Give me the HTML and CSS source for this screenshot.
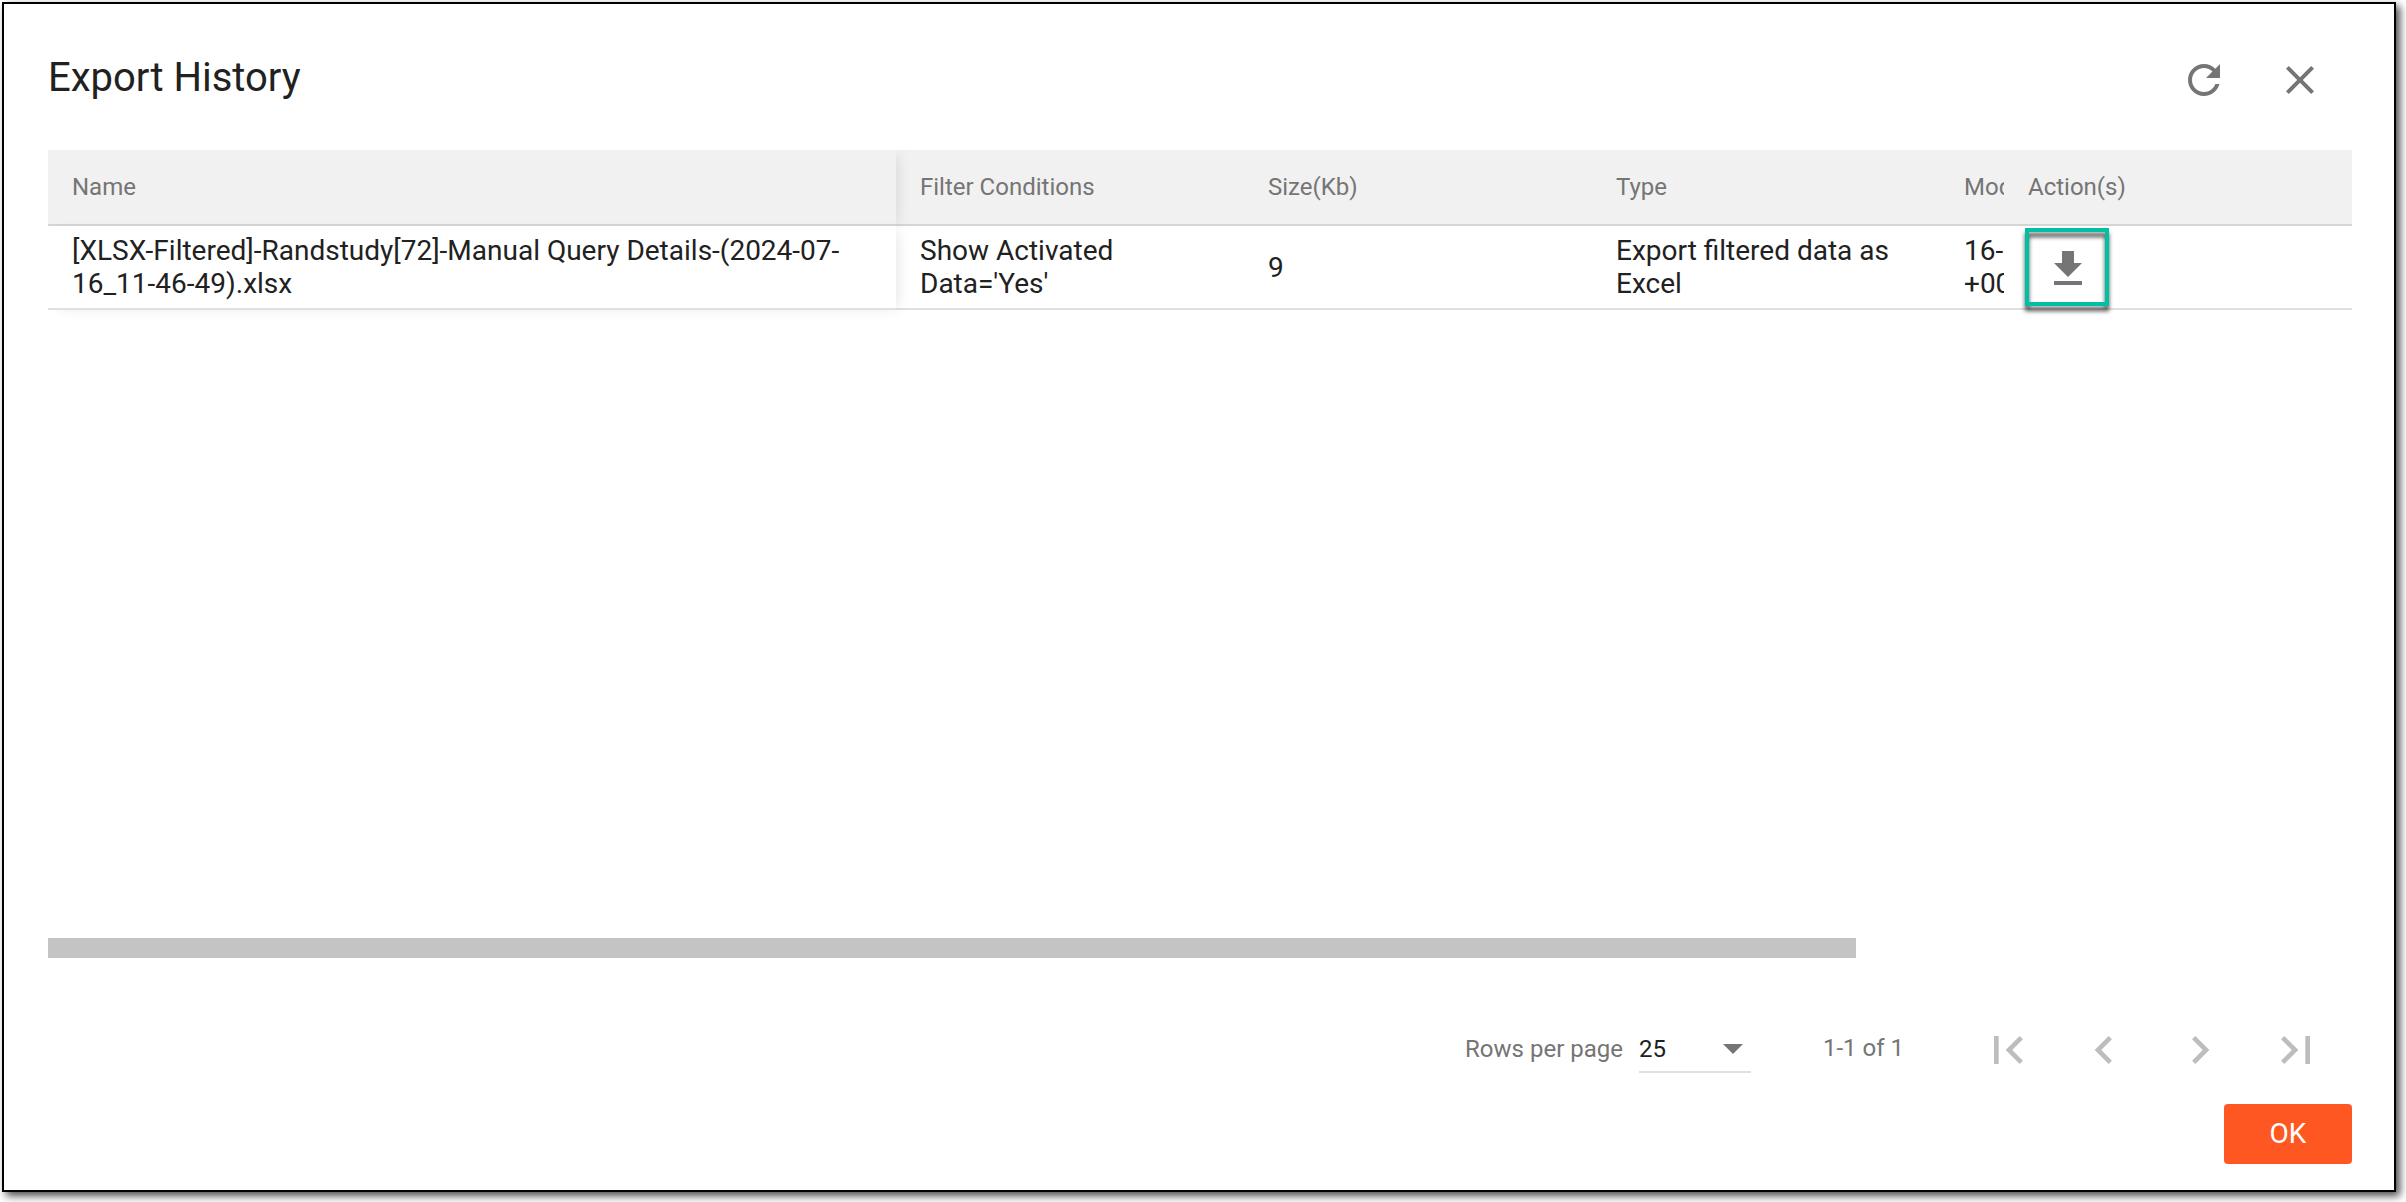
FILE: index.html
```html
<!DOCTYPE html>
<html lang="en">
  <head>
    <meta charset="UTF-8" />
    <meta name="viewport" content="width=device-width, initial-scale=1.0" />
    <title>Export History</title>

    <link rel="stylesheet" href="styles.css">
  </head>
  <body>
    <main class="dialog">
      <header class="dialog__header">
        <h1>Export History</h1>

        <div class="dialog__tools">
          <button class="icon-button" type="button" aria-label="Refresh">
            <svg class="icon" viewBox="0 0 24 24">
              <path d="M17.65 6.35C16.2 4.9 14.21 4 12 4c-4.42 0-7.99 3.58-7.99 8s3.57 8 7.99 8c3.73 0 6.84-2.55 7.73-6h-2.08c-.82 2.33-3.04 4-5.65 4-3.31 0-6-2.69-6-6s2.69-6 6-6c1.66 0 3.14.69 4.22 1.78L13 11h7V4l-2.35 2.35z" />
            </svg>
          </button>
          <button class="icon-button" type="button" aria-label="Close">
            <svg class="icon" viewBox="0 0 24 24">
              <path d="M19 6.41L17.59 5 12 10.59 6.41 5 5 6.41 10.59 12 5 17.59 6.41 19 12 13.41 17.59 19 19 17.59 13.41 12z" />
            </svg>
          </button>
        </div>
      </header>

      <section class="table">
        <div class="table__row table__row--head">
          <div class="table__cell table__cell--pinned">Name</div>
          <div class="table__cell">Filter Conditions</div>
          <div class="table__cell">Size(Kb)</div>
          <div class="table__cell">Type</div>
          <div class="table__cell table__cell--cut">Mod</div>
          <div class="table__cell">Action(s)</div>
        </div>

        <div class="table__row">
          <div class="table__cell table__cell--pinned">
            [XLSX-Filtered]-Randstudy[72]-Manual Query Details-(2024-07-<br />16_11-46-49).xlsx
          </div>
          <div class="table__cell">Show Activated Data='Yes'</div>
          <div class="table__cell">9</div>
          <div class="table__cell">Export filtered data as Excel</div>
          <div class="table__cell table__cell--cut">16-<br />+00</div>
          <div class="table__cell table__cell--action">
            <button class="icon-button" type="button" aria-label="Download">
              <svg class="icon" viewBox="0 0 24 24">
                <path d="M19 9h-4V3H9v6H5l7 7 7-7zM5 18v2h14v-2H5z" />
              </svg>
            </button>
          </div>
        </div>
      </section>

      <div class="scrollbar"><div class="scrollbar__thumb"></div></div>

      <nav class="pagination">
        <span class="pagination__label">Rows per page</span>
        <div class="pagination__select">
          <span>25</span>
          <svg class="pagination__arrow" viewBox="0 0 10 5">
            <path d="M0 0l5 5 5-5z" />
          </svg>
        </div>
        <span class="pagination__range">1-1 of 1</span>

        <div class="pagination__buttons">
          <button class="icon-button" type="button" aria-label="First page">
            <svg class="icon icon--page" viewBox="0 0 24 24">
              <path d="M18.41 16.59L13.82 12l4.59-4.59L17 6l-6 6 6 6zM6 6h2v12H6z" />
            </svg>
          </button>
          <button class="icon-button" type="button" aria-label="Previous page">
            <svg class="icon icon--page" viewBox="0 0 24 24">
              <path d="M15.41 7.41L14 6l-6 6 6 6 1.41-1.41L10.83 12z" />
            </svg>
          </button>
          <button class="icon-button" type="button" aria-label="Next page">
            <svg class="icon icon--page" viewBox="0 0 24 24">
              <path d="M10 6L8.59 7.41 13.17 12l-4.58 4.59L10 18l6-6z" />
            </svg>
          </button>
          <button class="icon-button" type="button" aria-label="Last page">
            <svg class="icon icon--page" viewBox="0 0 24 24">
              <path d="M5.59 7.41L10.18 12l-4.59 4.59L7 18l6-6-6-6zM16 6h2v12h-2z" />
            </svg>
          </button>
        </div>
      </nav>

      <footer class="dialog__footer">
        <button class="button" type="button">OK</button>
      </footer>
    </main>
  </body>
</html>
```
FILE: styles.css
```css
*,
*::before {
  box-sizing: border-box;
}

html,
body {
  height: 100%;
  margin: 0;
}

body {
  padding: 2px 10px 10px 2px;
  overflow: hidden;
  font-family: Roboto, 'Helvetica Neue', sans-serif;
  font-size: 28px;
  line-height: 33px;
  color: #212121;
  background-color: #fff;
}

h1 {
  margin: 0;
  font-size: 40px;
  font-weight: 400;
  line-height: 48px;
}

button {
  padding: 0;
  font: inherit;
  border: 0;
  background: none;
  cursor: pointer;
}

.dialog {
  display: flex;
  flex-direction: column;
  height: 1190px;
  padding: 0 42px 0 44px;
  border: 2px solid #000;
  background-color: #fff;
  box-shadow: 4px 4px 8px rgba(0, 0, 0, 0.7);
}

.dialog__header {
  display: flex;
  justify-content: space-between;
  align-items: flex-start;
  height: 146px;
  padding: 50px 28px 0 0;
}

.dialog__tools {
  display: flex;
  gap: 48px;
  padding-top: 2px;
}

.dialog__footer {
  display: flex;
  justify-content: flex-end;
}

.icon-button {
  display: block;
}

.icon {
  display: block;
  width: 48px;
  height: 48px;
  fill: #757575;
}

.icon--page {
  width: 56px;
  height: 56px;
  fill: #bdbdbd;
}

.table {
  height: 788px;
  overflow: hidden;
}

.table__row {
  display: grid;
  grid-template-columns: 848px 348px 348px 348px 64px 348px;
  height: 84px;
}

.table__row--head {
  position: relative;
  z-index: 1;
  height: 76px;
  font-size: 24px;
  color: #757575;
}

.table__cell {
  display: flex;
  align-items: center;
  padding: 0 24px;
  border-bottom: 2px solid #e0e0e0;
}

.table__row--head .table__cell {
  border-bottom-color: #d5d5d5;
  background-color: #f1f1f1;
}

.table__cell--pinned {
  position: relative;
  z-index: 1;
  background-color: #fff;
  box-shadow: 6px 2px 12px -4px rgba(0, 0, 0, 0.1);
}

.table__cell--cut {
  padding-right: 0;
  overflow: hidden;
}

.table__cell--action {
  position: relative;
  padding-top: 4px;
  padding-left: 40px;
}

.table__cell--action::before {
  content: '';
  position: absolute;
  top: 2px;
  left: 21px;
  width: 84px;
  height: 78px;
  border: 4px solid #00bfa5;
  filter: drop-shadow(0 5px 2px rgba(0, 0, 0, 0.7));
}

.scrollbar {
  height: 20px;
}

.scrollbar__thumb {
  width: 1808px;
  height: 20px;
  background-color: #c4c4c4;
}

.pagination {
  display: flex;
  justify-content: flex-end;
  align-items: center;
  height: 146px;
  padding: 38px 28px 0 0;
  font-size: 24px;
  color: #757575;
}

.pagination__label {
  margin-right: 16px;
  padding-bottom: 2px;
}

.pagination__select {
  display: flex;
  justify-content: space-between;
  align-items: center;
  width: 112px;
  height: 46px;
  margin-right: 72px;
  padding-right: 8px;
  color: #212121;
  border-bottom: 2px solid #e0e0e0;
}

.pagination__arrow {
  width: 20px;
  height: 10px;
  fill: #757575;
}

.pagination__range {
  margin-right: 76px;
  padding-bottom: 4px;
}

.pagination__buttons {
  display: flex;
  gap: 40px;
}

.button {
  width: 128px;
  height: 60px;
  padding-bottom: 2px;
  color: #fff;
  border-radius: 4px;
  background-color: #ff5722;
}
```
